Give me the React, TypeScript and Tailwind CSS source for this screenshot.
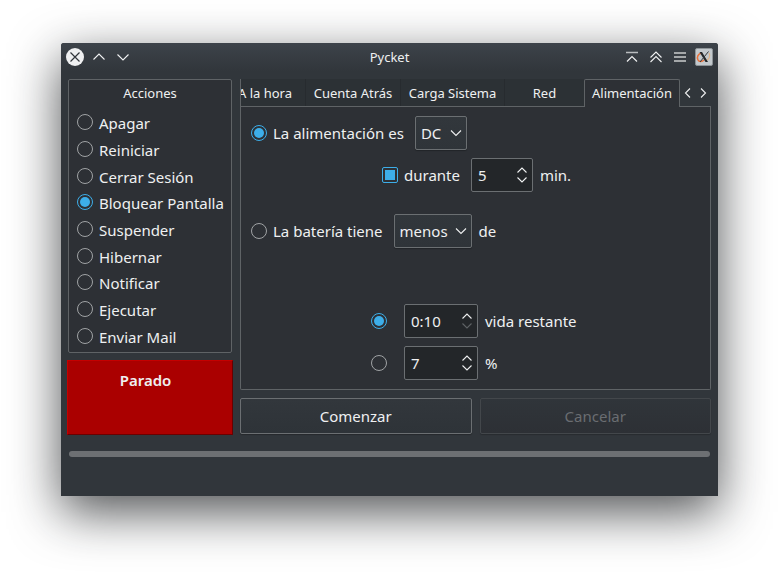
import { useState } from "react";
import type { ReactNode } from "react";

const ACTIONS = [
  "Apagar",
  "Reiniciar",
  "Cerrar Sesión",
  "Bloquear Pantalla",
  "Suspender",
  "Hibernar",
  "Notificar",
  "Ejecutar",
  "Enviar Mail",
];

const RADIO =
  "size-4 shrink-0 appearance-none rounded-full border border-[#a0a3a5] bg-clip-content p-[2px] checked:border-[#3daee9] checked:bg-[#3daee9]";

function Glyph({ d, size = 16, className = "" }: { d: string; size?: number; className?: string }) {
  return (
    <svg
      width={size}
      height={size}
      viewBox={`0 0 ${size} ${size}`}
      fill="none"
      stroke="currentColor"
      strokeWidth="1.1"
      aria-hidden="true"
      className={className}
    >
      <path d={d} />
    </svg>
  );
}

function TitleButton({ label, children }: { label: string; children: ReactNode }) {
  return (
    <button type="button" aria-label={label} className="grid size-[18px] place-items-center">
      {children}
    </button>
  );
}

function TitleBar() {
  return (
    <header className="grid h-7 grid-cols-[1fr_auto_1fr] items-center bg-linear-to-b from-[#3d434a] to-[#31363b] px-[5px]">
      <div className="flex gap-[6px]">
        <TitleButton label="Cerrar">
          <svg width="18" height="18" viewBox="0 0 18 18" aria-hidden="true">
            <circle cx="9" cy="9" r="9" fill="#eff0f1" />
            <path d="M4.5 4.5 13.5 13.5M13.5 4.5 4.5 13.5" stroke="#31363b" strokeWidth="1.2" />
          </svg>
        </TitleButton>
        <TitleButton label="Maximizar">
          <Glyph size={18} d="M3.5 11.5 9 6l5.5 5.5" />
        </TitleButton>
        <TitleButton label="Minimizar">
          <Glyph size={18} d="M3.5 6.5 9 12l5.5-5.5" />
        </TitleButton>
      </div>
      <h1 className="text-[13px] leading-5">Pycket</h1>
      <div className="flex justify-end gap-[6px]">
        <TitleButton label="Mantener encima">
          <svg width="18" height="18" viewBox="0 0 18 18" fill="none" aria-hidden="true">
            <path d="M3 4.500h12" stroke="#b9bcbe" strokeWidth="1.500" />
            <path d="M4 13.500l5-5 5 5" stroke="#eff0f1" strokeWidth="1.200" />
          </svg>
        </TitleButton>
        <TitleButton label="Recoger">
          <Glyph size={18} d="M3.5 9.5 9 4l5.500 5.500M3.500 14 9 8.500l5.500 5.500" />
        </TitleButton>
        <TitleButton label="Menú">
          <svg width="18" height="18" viewBox="0 0 18 18" aria-hidden="true">
            <path d="M3 5h12M3 9h12M3 13h12" stroke="#a5a8aa" strokeWidth="2" />
          </svg>
        </TitleButton>
        <TitleButton label="Ventana">
          <svg width="18" height="18" viewBox="0 0 18 18" aria-hidden="true">
            <rect x="0.500" y="0.500" width="17" height="17" rx="1.500" fill="#c3c9cd" stroke="#8d9397" />
            <path d="M7 5C3 5.500 1.500 9 3 12c1 2 4 2 6 0" fill="none" stroke="#e8703a" strokeWidth="1.500" />
            <path d="M10 13c4-1 6-5 4-8" fill="none" stroke="#e0b48a" strokeWidth="1.200" />
            <path d="M4.500 4h2.500L13 14h-2.500Z" fill="#23272a" />
            <path d="M13.500 3.500 5 14" stroke="#33383c" strokeWidth="1" />
          </svg>
        </TitleButton>
      </div>
    </header>
  );
}

function Tab({ label, className }: { label: string; className: string }) {
  return (
    <button
      type="button"
      role="tab"
      aria-selected="false"
      className={`flex h-[27px] shrink-0 items-center justify-center bg-[#2c3135] whitespace-nowrap ${className}`}
    >
      {label}
    </button>
  );
}

function Choice({ label, options, className }: { label: string; options: string[]; className: string }) {
  return (
    <div className={`grid h-[34px] items-center ${className}`}>
      <select
        aria-label={label}
        className="col-start-1 row-start-1 h-full w-full appearance-none rounded-[2px] border border-[#6b6f72] bg-linear-to-b from-[#32373c] to-[#2f3439] pl-[5px] shadow-[0_1px_1px_rgba(0,0,0,0.25)]"
      >
        {options.map((o) => (
          <option key={o}>{o}</option>
        ))}
      </select>
      <Glyph
        size={12}
        d="M1 3.5 6 8.5l5-5"
        className="pointer-events-none col-start-1 row-start-1 mr-[5px] justify-self-end"
      />
    </div>
  );
}

function Spin({
  label,
  initial,
  atMinimum = false,
  className,
}: {
  label: string;
  initial: string;
  atMinimum?: boolean;
  className: string;
}) {
  const [value, setValue] = useState(initial);
  return (
    <div className={`flex h-[34px] rounded-[2px] border border-[#6b6f72] bg-[#232629] ${className}`}>
      <input
        type="text"
        aria-label={label}
        value={value}
        onChange={(e) => setValue(e.target.value)}
        className="min-w-0 flex-1 bg-transparent pl-[6px] outline-none"
      />
      <div className="flex w-5 flex-col items-center justify-center">
        <button type="button" aria-label="Aumentar">
          <Glyph size={10} d="M0.5 7.5 5 3l4.5 4.5" />
        </button>
        <button type="button" aria-label="Disminuir" disabled={atMinimum} className="disabled:text-[#5f6366]">
          <Glyph size={10} d="M0.5 2.5 5 7l4.5-4.5" />
        </button>
      </div>
    </div>
  );
}

function ActionsBox() {
  return (
    <fieldset className="flex h-[274px] flex-col rounded-[2px] border border-[#5f6366] bg-[#2d3035]">
      <legend className="float-left h-[29px] w-full text-center text-[13px] leading-[26px]">Acciones</legend>
      <div className="flex h-[240px] flex-col pl-2">
        {ACTIONS.map((name) => (
          <label key={name} className="flex flex-1 items-center gap-[6px] leading-5 whitespace-nowrap">
            <input type="radio" name="accion" defaultChecked={name === "Bloquear Pantalla"} className={RADIO} />
            <span className="pt-[2px]">{name}</span>
          </label>
        ))}
      </div>
    </fieldset>
  );
}

function PowerTabs() {
  return (
    <section className="flex flex-col">
      <div className="flex h-7 items-end text-[13px] leading-5">
        <div role="tablist" className="flex min-w-0 flex-1 items-end">
          <div className="flex h-7 min-w-0 flex-1 items-end justify-end overflow-hidden border-b border-l border-[#5f6366]">
            <Tab label="A la hora" className="w-20" />
            <Tab label="Cuenta Atrás" className="w-[95px] border-l border-[#272b2f]" />
            <Tab label="Carga Sistema" className="w-[104px] border-l border-[#272b2f]" />
            <Tab label="Red" className="w-20 border-l border-[#272b2f]" />
          </div>
          <button
            type="button"
            role="tab"
            aria-selected="true"
            className="flex h-7 w-24 shrink-0 items-center justify-center rounded-t-[2px] border border-b-0 border-[#5f6366] bg-[#2d3035] pb-px"
          >
            Alimentación
          </button>
        </div>
        <div className="flex h-7 w-[31px] shrink-0 items-center justify-center gap-[3px] border-b border-[#5f6366]">
          <button type="button" aria-label="Pestañas anteriores">
            <Glyph size={12} d="M8 1.5 3.5 6 8 10.5" />
          </button>
          <button type="button" aria-label="Pestañas siguientes">
            <Glyph size={12} d="M4 1.5 8.5 6 4 10.5" />
          </button>
        </div>
      </div>

      <div
        role="tabpanel"
        className="flex flex-col rounded-b-[2px] border border-t-0 border-[#5f6366] bg-[#2d3035] pt-[9px] pb-[9px] pl-[10px] leading-5"
      >
        <div className="flex items-center">
          <label className="flex items-center gap-[6px]">
            <input type="radio" name="condicion" defaultChecked className={RADIO} />
            La alimentación es
          </label>
          <Choice label="Tipo de alimentación" options={["DC", "AC"]} className="ml-[11px] w-[52px]" />
        </div>

        <div className="mt-2 flex items-center pl-[131px]">
          <label className="flex items-center gap-[6px]">
            <input
              type="checkbox"
              defaultChecked
              className="size-4 appearance-none rounded-[2px] border border-[#a0a3a5] bg-clip-content p-[2px] checked:border-[#3daee9] checked:bg-[#3daee9]"
            />
            durante
          </label>
          <Spin label="Minutos" initial="5" className="mr-[7px] ml-[11px] w-[62px]" />
          <span>min.</span>
        </div>

        <div className="mt-[22px] flex items-center">
          <label className="flex items-center gap-[6px]">
            <input type="radio" name="condicion" className={RADIO} />
            La batería tiene
          </label>
          <Choice label="Comparación" options={["menos", "más"]} className="mr-[7px] ml-[11px] w-[78px]" />
          <span>de</span>
        </div>

        <div className="mt-14 flex flex-col gap-2 pl-[120px]">
          <div className="flex items-center">
            <input type="radio" name="medida" aria-label="vida restante" defaultChecked className={RADIO} />
            <Spin label="Tiempo restante" initial="0:10" atMinimum className="mr-[7px] ml-[17px] w-[74px]" />
            <span>vida restante</span>
          </div>
          <div className="flex items-center">
            <input type="radio" name="medida" aria-label="porcentaje" className={RADIO} />
            <Spin label="Porcentaje" initial="7" className="mr-[7px] ml-[17px] w-[74px]" />
            <span>%</span>
          </div>
        </div>
      </div>
    </section>
  );
}

export default function App() {
  return (
    <div className="min-h-screen bg-white px-[61px] pt-[43px] pb-[79px] font-['Noto_Sans',sans-serif] text-[15px] text-[#eff0f1]">
      <main className="overflow-hidden rounded-t-[3px] bg-[#31363b] shadow-[0_16px_50px_rgba(20,23,26,0.75)]">
        <TitleBar />
        <div className="flex gap-2 px-[7px] pt-2">
          <div className="flex w-[164px] shrink-0 flex-col gap-[7px]">
            <ActionsBox />
            <div
              role="status"
              className="-mx-px h-[75px] border border-t-[#c40000] border-r-[#6a0000] border-b-[#6a0000] border-l-[#c40000] bg-[#aa0000] pt-[9px] pr-[9px] text-center leading-5 font-semibold"
            >
              Parado
            </div>
          </div>
          <div className="flex min-w-0 flex-1 flex-col gap-2">
            <PowerTabs />
            <div className="grid grid-cols-2 gap-2">
              <button
                type="button"
                className="h-9 rounded-[2px] border border-[#6b6f72] bg-linear-to-b from-[#32373c] to-[#2e3338] shadow-[0_1px_1px_rgba(0,0,0,0.25)]"
              >
                Comenzar
              </button>
              <button
                type="button"
                disabled
                className="h-9 rounded-[2px] border border-[#43474b] bg-linear-to-b from-[#30353a] to-[#2d3035] text-[#6a6d71] shadow-[0_1px_1px_rgba(0,0,0,0.2)]"
              >
                Cancelar
              </button>
            </div>
          </div>
        </div>
        <div className="px-2 pt-4 pb-[39px]">
          <div
            role="progressbar"
            aria-label="Progreso"
            aria-valuenow={0}
            className="h-[6px] rounded-full bg-[#6d7073]"
          />
        </div>
      </main>
    </div>
  );
}
